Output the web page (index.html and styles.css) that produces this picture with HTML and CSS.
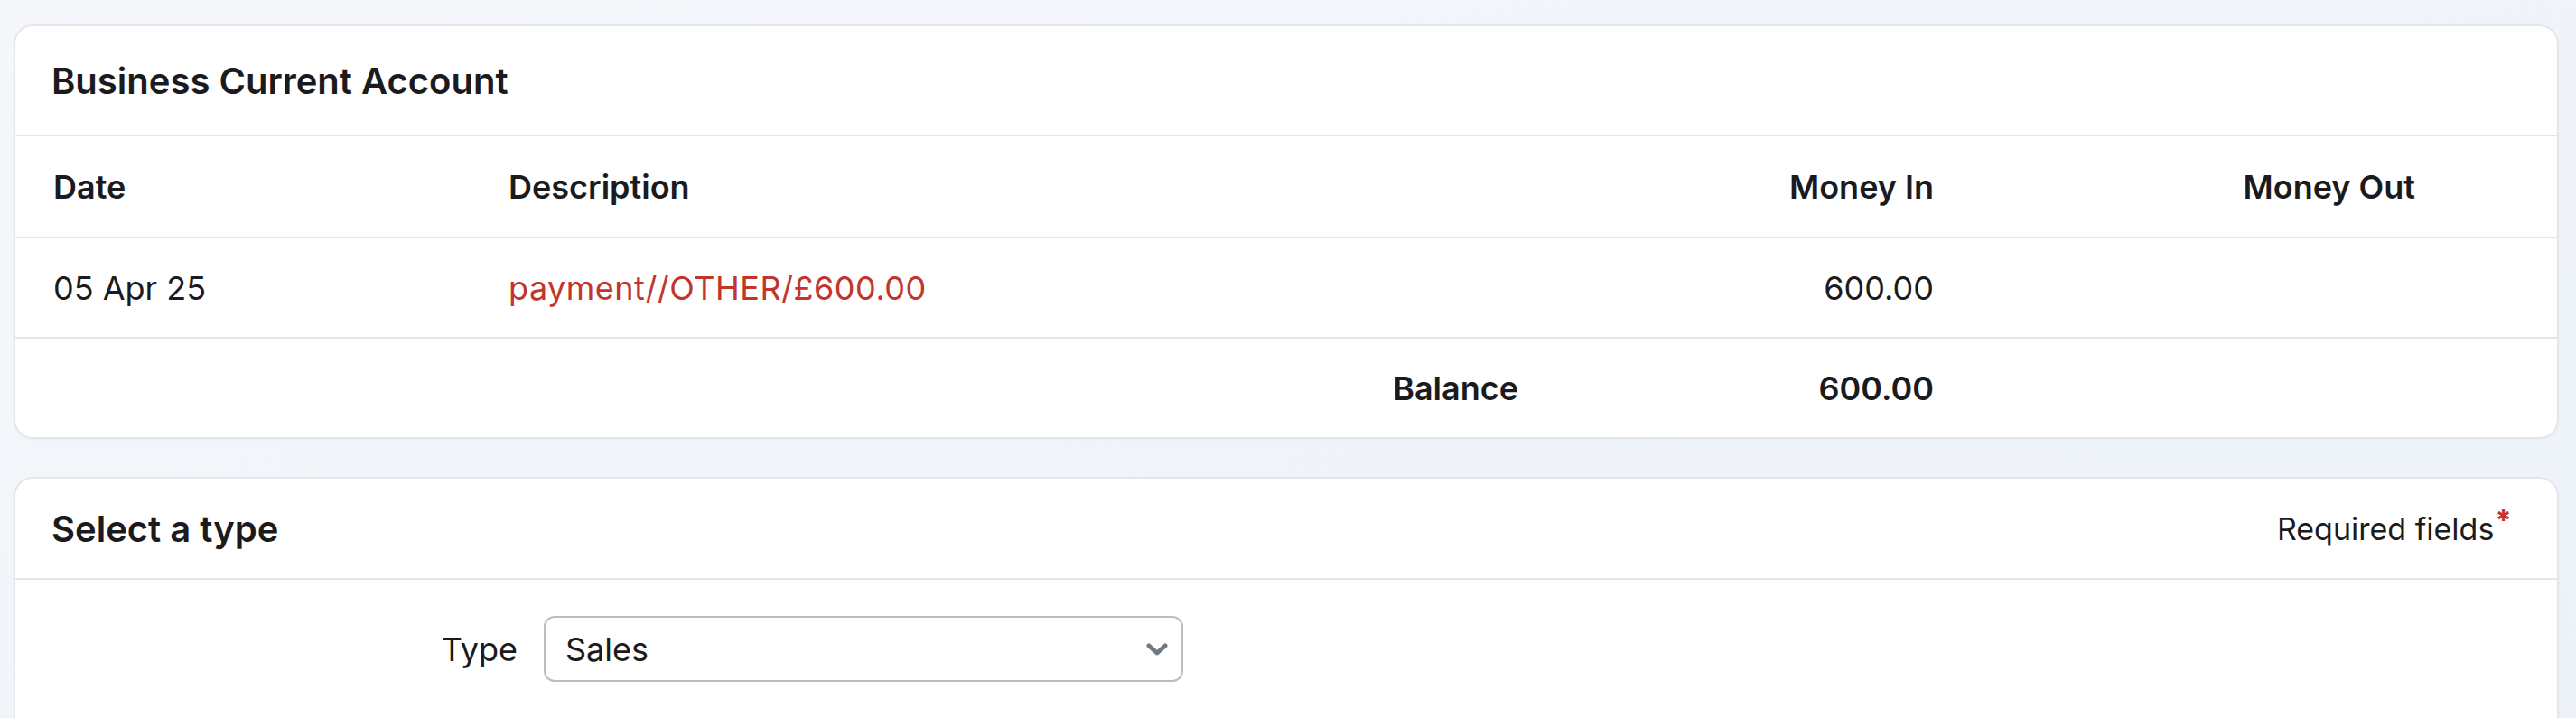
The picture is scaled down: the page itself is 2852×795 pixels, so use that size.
FILE: index.html
```html
<!DOCTYPE html>
<html lang="en">
<head>
<meta charset="utf-8">
<title>Business Current Account</title>
<link rel="stylesheet" href="styles.css">
</head>
<body>
<main class="page">
  <section class="card">
    <header class="card-head">
      <h2 class="card-title">Business Current Account</h2>
    </header>
    <div class="ledger">
      <div class="ledger-row ledger-head">
        <div class="cell">Date</div>
        <div class="cell">Description</div>
        <div class="cell"></div>
        <div class="cell num">Money In</div>
        <div class="cell num">Money Out</div>
        <div class="cell"></div>
      </div>
      <div class="ledger-row">
        <div class="cell">05 Apr 25</div>
        <div class="cell"><a class="desc-link" href="#">payment//OTHER/£600.00</a></div>
        <div class="cell"></div>
        <div class="cell num">600.00</div>
        <div class="cell num"></div>
        <div class="cell"></div>
      </div>
      <div class="ledger-row ledger-total">
        <div class="cell"></div>
        <div class="cell"></div>
        <div class="cell num">Balance</div>
        <div class="cell num">600.00</div>
        <div class="cell num"></div>
        <div class="cell"></div>
      </div>
    </div>
  </section>

  <section class="card">
    <header class="card-head card-head-split">
      <h2 class="card-title">Select a type</h2>
      <span class="required">Required fields<sup class="req-star">*</sup></span>
    </header>
    <div class="form-body">
      <div class="form-row">
        <label class="form-label" for="type">Type</label>
        <div class="select-wrap">
          <select id="type" class="select">
            <option>Sales</option>
            <option>Purchases</option>
            <option>Transfer</option>
          </select>
          <svg class="chevron" width="26" height="16" viewBox="0 0 26 16" aria-hidden="true">
            <path d="M4 4 L13 12 L22 4" fill="none" stroke="#6d7a83" stroke-width="5" stroke-linecap="round" stroke-linejoin="round"/>
          </svg>
        </div>
      </div>
    </div>
  </section>
</main>
</body>
</html>
```

FILE: styles.css
```css
* { box-sizing: border-box; }

html, body {
  margin: 0;
  height: 100%;
}

body {
  font-family: Inter, "Noto Sans", "Liberation Sans", sans-serif;
  color: #1b1b1d;
  background: linear-gradient(160deg, #f5f7fb 0%, #f0f4fa 60%, #edf2fa 100%);
  overflow: hidden;
}

.page {
  padding: 27px 19px 0 15px;
}

.card {
  background: #ffffff;
  border: 2px solid #e4e6ea;
  border-radius: 22px;
  box-shadow: 0 1px 3px rgba(30, 40, 70, 0.04);
}

.card + .card {
  margin-top: 42px;
}

.card-head {
  height: 122px;
  display: flex;
  align-items: center;
  padding: 0 40px;
  border-bottom: 2px solid #e4e6ea;
}

.card-head-split {
  height: 112px;
  justify-content: space-between;
  padding: 0 50px 0 40px;
}

.card-title {
  margin: 0;
  font-size: 40px;
  font-weight: 600;
  letter-spacing: 0;
}

.ledger-row {
  display: grid;
  grid-template-columns: 504px 779px 423px 460px 533px 1fr;
  height: 111px;
  align-items: center;
  font-size: 36px;
}

.ledger-row + .ledger-row {
  border-top: 2px solid #e4e6ea;
}

.ledger-head,
.ledger-total {
  font-weight: 600;
}

.cell {
  padding: 0 42px;
  white-space: nowrap;
}

.num {
  text-align: right;
}

.desc-link {
  color: #c2352c;
  text-decoration: none;
  letter-spacing: 0.5px;
}

.required {
  font-size: 34px;
  color: #1b1b1d;
}

.req-star {
  color: #c2352c;
  font-size: 32px;
  font-weight: 800;
  vertical-align: top;
  position: relative;
  top: -8px;
  margin-left: 1px;
}

.form-body {
  padding: 40px 0 80px;
}

.form-row {
  display: grid;
  grid-template-columns: 556px 708px;
  column-gap: 29px;
  align-items: center;
}

.form-label {
  text-align: right;
  font-size: 36px;
}

.select-wrap {
  position: relative;
  height: 73px;
}

.select {
  appearance: none;
  -webkit-appearance: none;
  width: 100%;
  height: 100%;
  border: 2px solid #b7bdc1;
  border-radius: 12px;
  background: #ffffff;
  padding: 0 60px 0 22px;
  font-family: inherit;
  font-size: 36px;
  color: #1b1b1d;
}

.chevron {
  position: absolute;
  right: 16px;
  top: 29px;
  pointer-events: none;
}
```
